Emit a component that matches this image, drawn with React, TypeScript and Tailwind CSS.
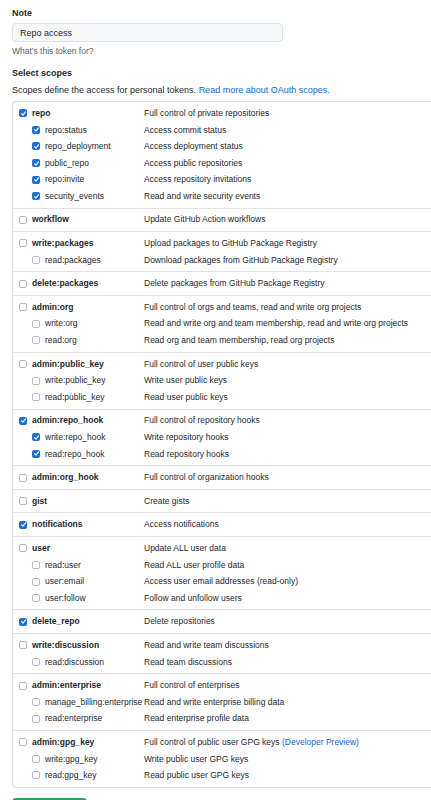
type Scope = { name: string; desc: string; checked?: boolean; preview?: boolean };

const groups: Scope[][] = [
  [
    { name: "repo", desc: "Full control of private repositories", checked: true },
    { name: "repo:status", desc: "Access commit status", checked: true },
    { name: "repo_deployment", desc: "Access deployment status", checked: true },
    { name: "public_repo", desc: "Access public repositories", checked: true },
    { name: "repo:invite", desc: "Access repository invitations", checked: true },
    { name: "security_events", desc: "Read and write security events", checked: true },
  ],
  [{ name: "workflow", desc: "Update GitHub Action workflows" }],
  [
    { name: "write:packages", desc: "Upload packages to GitHub Package Registry" },
    { name: "read:packages", desc: "Download packages from GitHub Package Registry" },
  ],
  [{ name: "delete:packages", desc: "Delete packages from GitHub Package Registry" }],
  [
    { name: "admin:org", desc: "Full control of orgs and teams, read and write org projects" },
    { name: "write:org", desc: "Read and write org and team membership, read and write org projects" },
    { name: "read:org", desc: "Read org and team membership, read org projects" },
  ],
  [
    { name: "admin:public_key", desc: "Full control of user public keys" },
    { name: "write:public_key", desc: "Write user public keys" },
    { name: "read:public_key", desc: "Read user public keys" },
  ],
  [
    { name: "admin:repo_hook", desc: "Full control of repository hooks", checked: true },
    { name: "write:repo_hook", desc: "Write repository hooks", checked: true },
    { name: "read:repo_hook", desc: "Read repository hooks", checked: true },
  ],
  [{ name: "admin:org_hook", desc: "Full control of organization hooks" }],
  [{ name: "gist", desc: "Create gists" }],
  [{ name: "notifications", desc: "Access notifications", checked: true }],
  [
    { name: "user", desc: "Update ALL user data" },
    { name: "read:user", desc: "Read ALL user profile data" },
    { name: "user:email", desc: "Access user email addresses (read-only)" },
    { name: "user:follow", desc: "Follow and unfollow users" },
  ],
  [{ name: "delete_repo", desc: "Delete repositories", checked: true }],
  [
    { name: "write:discussion", desc: "Read and write team discussions" },
    { name: "read:discussion", desc: "Read team discussions" },
  ],
  [
    { name: "admin:enterprise", desc: "Full control of enterprises" },
    { name: "manage_billing:enterprise", desc: "Read and write enterprise billing data" },
    { name: "read:enterprise", desc: "Read enterprise profile data" },
  ],
  [
    { name: "admin:gpg_key", desc: "Full control of public user GPG keys", preview: true },
    { name: "write:gpg_key", desc: "Write public user GPG keys" },
    { name: "read:gpg_key", desc: "Read public user GPG keys" },
  ],
];

function Box({ checked }: { checked?: boolean }) {
  if (checked) {
    return (
      <span className="flex h-[8px] w-[8px] shrink-0 items-center justify-center rounded-[2px] bg-[#1a6fe0]">
        <svg viewBox="0 0 10 10" className="h-[7px] w-[7px]">
          <path d="M2.2 5.2 L4.2 7.2 L7.9 2.8" fill="none" stroke="#fff" strokeWidth="1.6" strokeLinecap="round" strokeLinejoin="round" />
        </svg>
      </span>
    );
  }
  return <span className="h-[8px] w-[8px] shrink-0 rounded-[2px] border border-[#b8bcc2] bg-white" />;
}

function Row({ scope, child }: { scope: Scope; child: boolean }) {
  return (
    <div className="flex h-[16.6px] items-center">
      <div className={`flex w-[131px] shrink-0 items-center gap-[5px] ${child ? "pl-[19px]" : "pl-[6px]"}`}>
        <Box checked={scope.checked} />
        <span className={`whitespace-nowrap ${child ? "" : "font-bold"}`}>{scope.name}</span>
      </div>
      <div className="whitespace-nowrap">
        {scope.desc}
        {scope.preview && <span className="text-[#0969da]"> (Developer Preview)</span>}
      </div>
    </div>
  );
}

export default function App() {
  return (
    <div className="h-screen w-full overflow-hidden bg-white px-[12px] pt-[6px] text-[#24292f]" style={{ fontFamily: '"Liberation Sans", Arial, sans-serif' }}>
      <div className="text-[9px] font-bold leading-[14px]">Note</div>
      <input
        readOnly
        defaultValue="Repo access"
        className="mt-[3px] block h-[19px] w-[271px] rounded-[4px] border border-[#dfe3e8] bg-[#f6f8fa] px-[7px] text-[9px] text-[#24292f] outline-none"
      />
      <div className="mt-[2.5px] text-[8.5px] leading-[12px] text-[#57606a]">What's this token for?</div>

      <div className="mt-[9px] text-[9px] font-bold leading-[14px]">Select scopes</div>
      <div className="mt-[3px] whitespace-nowrap text-[9px] leading-[14px]">
        Scopes define the access for personal tokens.{" "}
        <span className="text-[#0969da]">Read more about OAuth scopes.</span>
      </div>

      <div className="mt-[4.5px] w-[560px] rounded-l-[4px] border border-[#d8dee4] text-[8.5px]">
        {groups.map((g, i) => (
          <div key={g[0].name} className={`py-[3px] ${i > 0 ? "border-t border-[#e1e4e8]" : ""}`}>
            {g.map((s, j) => (
              <Row key={s.name} scope={s} child={j > 0} />
            ))}
          </div>
        ))}
      </div>

      <button className="mt-[10px] h-[22px] w-[75px] rounded-[4px] bg-[#2da44e] text-[9px] font-bold text-white">
        Generate token
      </button>
    </div>
  );
}
